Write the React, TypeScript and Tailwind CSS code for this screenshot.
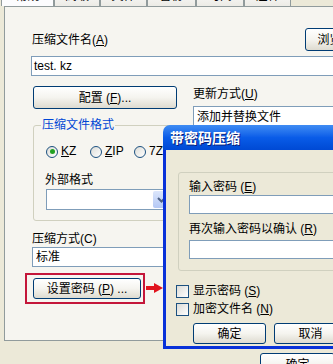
import type { ReactNode } from 'react'

const font = "font-['Liberation_Sans','Noto_Sans_CJK_SC',sans-serif]"

function XPButton({ children, className = '' }: { children: ReactNode; className?: string }) {
  return (
    <div
      className={`flex items-center justify-center rounded-[3px] border border-[#003c74] bg-linear-to-b from-white via-[#f5f4ef] to-[#dedbd0] text-[12px] leading-[14px] text-black ${className}`}
    >
      {children}
    </div>
  )
}

function XPSelect({ value, className = '', arrow = true }: { value: string; className?: string; arrow?: boolean }) {
  return (
    <div className={`flex items-stretch border border-[#7f9db9] bg-white ${className}`}>
      <div className="flex-1 flex items-center px-[3px] text-[12px] leading-[14px] whitespace-nowrap">{value}</div>
      {arrow && (
        <div className="w-[16px] m-px rounded-[2px] bg-linear-to-b from-[#dce6fb] to-[#b4c8f5] flex items-center justify-center">
          <svg width="9" height="6" viewBox="0 0 9 6">
            <path d="M1 1 L4.5 4.5 L8 1" fill="none" stroke="#4d6185" strokeWidth="2" />
          </svg>
        </div>
      )}
    </div>
  )
}

function Radio({ label, checked = false }: { label: ReactNode; checked?: boolean }) {
  return (
    <div className="w-[44px] flex items-center gap-[3px] text-[12px] leading-[13px]">
      <span className="w-[12px] h-[12px] rounded-full border border-[#1c5180] bg-linear-to-br from-[#dcdcd7] to-white flex items-center justify-center">
        {checked && <span className="w-[5px] h-[5px] rounded-full bg-[#21a121]" />}
      </span>
      <span>{label}</span>
    </div>
  )
}

function Checkbox({ label }: { label: ReactNode }) {
  return (
    <div className="flex items-center gap-[4px] text-[12px] leading-[13px]">
      <span className="w-[13px] h-[13px] border border-[#1c5180] bg-linear-to-br from-[#dcdcd7] to-white" />
      <span>{label}</span>
    </div>
  )
}

const tabs = [
  { name: '常规', w: 'w-[53px]', active: true },
  { name: '高级', w: 'w-[46px]' },
  { name: '文件', w: 'w-[47px]' },
  { name: '备份', w: 'w-[49px]' },
  { name: '时间', w: 'w-[48px]' },
  { name: '注释', w: 'w-[47px]' },
]

export default function App() {
  return (
    <div className={`relative w-[333px] h-[364px] overflow-hidden bg-[#ece9d8] text-black ${font}`}>
      {/* tab strip, only the lower edge shows */}
      <div className="flex h-[20px] -mt-[14px] pl-[1px]">
        {tabs.map((t) => (
          <div
            key={t.name}
            className={`${t.w} h-full border border-b-0 border-[#919b9c] flex justify-center pt-[2px] text-[12px] leading-[14px] ${
              t.active ? 'bg-[#fcfcfe] relative z-10 h-[21px]' : 'bg-linear-to-b from-white to-[#ecebe6]'
            }`}
          >
            {t.name}
          </div>
        ))}
      </div>

      {/* tab panel */}
      <div className="ml-[4px] w-[420px] h-[335px] border border-[#919b9c] bg-[#f6f5f0] pl-[27px] pt-[21px]">
        <div className="flex items-center w-[348px] h-[23px]">
          <span className="text-[12px] leading-[14px]">
            压缩文件名(<span className="underline">A</span>)
          </span>
          <XPButton className="ml-auto w-[75px] h-[23px]">浏览(B)...</XPButton>
        </div>

        <div className="mt-[5px] -ml-px w-[360px] h-[20px] border border-[#7f9db9] bg-white flex items-center px-[2px] text-[12px] leading-[14px]">
          test. kz
        </div>

        <div className="flex mt-[10px]">
          <div className="w-[145px] flex flex-col">
            <XPButton className="ml-px w-[144px] h-[23px]">
              配置 (<span className="underline">F</span>)...
            </XPButton>

            <fieldset className="mt-[9px] ml-px w-[150px] rounded-[3px] border border-[#d0d0bf] pl-[12px] pb-[10px]">
              <legend className="-ml-[5px] px-[1px] text-[12px] leading-[15px] text-[#0046d5]">压缩文件格式</legend>
              <div className="flex mt-[12px]">
                <Radio checked label={<><span className="underline">K</span>Z</>} />
                <Radio label={<><span className="underline">Z</span>IP</>} />
                <Radio label="7Z" />
              </div>
              <div className="mt-[15px] -ml-px text-[12px] leading-[14px]">外部格式</div>
              <XPSelect value="" className="mt-[2px] w-[125px] h-[21px]" />
            </fieldset>

            <div className="mt-[11px] text-[12px] leading-[14px]">压缩方式(C)</div>
            <XPSelect value="标准" arrow={false} className="mt-[1px] w-[145px] h-[20px]" />

            <div className="relative mt-[11px] ml-px w-[108px] h-[21px]">
              <XPButton className="w-full h-full">
                设置密码 (<span className="underline">P</span>) ...
              </XPButton>
              {/* annotation overlay */}
              <div className="absolute -left-[8px] -right-[4px] -top-[5px] -bottom-[5px] border-[2px] border-[#c4163a]" />
              <svg className="absolute left-[113px] top-[5px]" width="17" height="10" viewBox="0 0 17 10">
                <rect x="0" y="3" width="9" height="4" fill="#e0141e" />
                <path d="M8 0 L17 5 L8 10 Z" fill="#e0141e" />
              </svg>
            </div>
          </div>

          <div className="ml-[16px] flex flex-col">
            <div className="mt-[1px] text-[12px] leading-[14px]">
              更新方式(<span className="underline">U</span>)
            </div>
            <XPSelect value="添加并替换文件" className="mt-[5px] w-[180px] h-[21px]" />
          </div>
        </div>
      </div>

      {/* main window buttons */}
      <div className="pl-[260px] pt-[12px]">
        <XPButton className="w-[75px] h-[23px]">确定</XPButton>
      </div>

      {/* password dialog window on top */}
      <div className="absolute left-[163px] top-[125px] w-[210px] flex flex-col">
        <div className="h-[25px] rounded-t-[7px] bg-linear-to-b from-[#3f8cf3] via-[#0a5ce8] to-[#0049d4] flex items-center pl-[7px]">
          <span className="text-[14px] leading-[16px] font-bold text-white [text-shadow:1px_1px_#0a1f7a]">带密码压缩</span>
        </div>
        <div className="border-x-[3px] border-b-[3px] border-[#0831d9] bg-[#ece9d8] pb-[2px]">
          <div className="ml-[12px] mt-[22px] rounded-[3px] border border-[#d0d0bf] pl-[10px] pt-[7px] pb-[11px]">
            <div className="text-[12px] leading-[14px]">
              输入密码 (<span className="underline">E</span>)
            </div>
            <div className="mt-[1px] h-[19px] border border-[#7f9db9] bg-white" />
            <div className="mt-[8px] text-[12px] leading-[14px]">
              再次输入密码以确认 (<span className="underline">R</span>)
            </div>
            <div className="mt-[4px] h-[19px] border border-[#7f9db9] bg-white" />
          </div>
          <div className="ml-[10px] mt-[14px]">
            <Checkbox label={<>显示密码 (<span className="underline">S</span>)</>} />
          </div>
          <div className="ml-[10px] mt-[5px]">
            <Checkbox label={<>加密文件名 (<span className="underline">N</span>)</>} />
          </div>
          <div className="flex gap-[8px] ml-[27px] mt-[7px]">
            <XPButton className="w-[73px] h-[21px]">确定</XPButton>
            <XPButton className="w-[73px] h-[21px]">取消</XPButton>
          </div>
        </div>
      </div>
    </div>
  )
}
